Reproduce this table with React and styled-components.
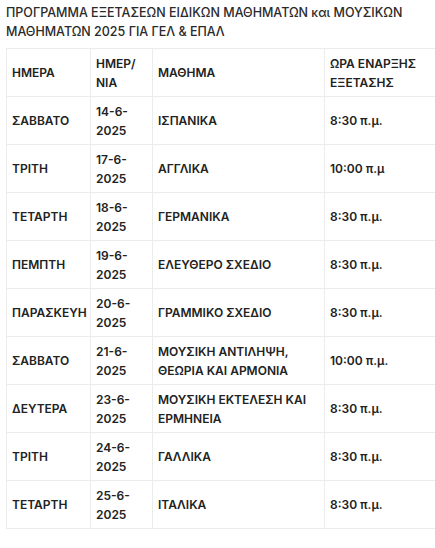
import React from "react";
import styled, { createGlobalStyle } from "styled-components";

const GlobalStyle = createGlobalStyle`
  html, body {
    margin: 0;
    padding: 0;
    background: #fff;
    overflow: hidden;
  }
  body {
    font-family: Inter, "Noto Sans", sans-serif;
    color: #222;
  }
`;

const Page = styled.div`
  padding: 3px 0 0 6px;
  width: 470px;
`;

const Title = styled.h2`
  margin: 0 0 7px 0;
  width: 420px;
  font-size: 12.5px;
  line-height: 19px;
  font-weight: 500;
  color: #2a2a2a;
`;

const Table = styled.table`
  border-collapse: collapse;
  width: 468px;
  table-layout: fixed;
`;

const Cell = styled.td`
  box-sizing: border-box;
  border: 1px solid #ececec;
  padding: 4px 5px;
  height: 48px;
  font-size: 12px;
  line-height: 19px;
  font-weight: 600;
  color: #222;
  vertical-align: middle;
  width: ${(p) => p.$w}px;
`;

const cols = [84, 62, 172, 150];

const rows = [
  ["ΣΑΒΒΑΤΟ", "14-6-\n2025", "ΙΣΠΑΝΙΚΑ", "8:30 π.μ."],
  ["ΤΡΙΤΗ", "17-6-\n2025", "ΑΓΓΛΙΚΑ", "10:00 π.μ"],
  ["ΤΕΤΑΡΤΗ", "18-6-\n2025", "ΓΕΡΜΑΝΙΚΑ", "8:30 π.μ."],
  ["ΠΕΜΠΤΗ", "19-6-\n2025", "ΕΛΕΥΘΕΡΟ ΣΧΕΔΙΟ", "8:30 π.μ."],
  ["ΠΑΡΑΣΚΕΥΗ", "20-6-\n2025", "ΓΡΑΜΜΙΚΟ ΣΧΕΔΙΟ", "8:30 π.μ."],
  ["ΣΑΒΒΑΤΟ", "21-6-\n2025", "ΜΟΥΣΙΚΗ ΑΝΤΙΛΗΨΗ,\nΘΕΩΡΙΑ ΚΑΙ ΑΡΜΟΝΙΑ", "10:00 π.μ."],
  ["ΔΕΥΤΕΡΑ", "23-6-\n2025", "ΜΟΥΣΙΚΗ ΕΚΤΕΛΕΣΗ ΚΑΙ\nΕΡΜΗΝΕΙΑ", "8:30 π.μ."],
  ["ΤΡΙΤΗ", "24-6-\n2025", "ΓΑΛΛΙΚΑ", "8:30 π.μ."],
  ["ΤΕΤΑΡΤΗ", "25-6-\n2025", "ΙΤΑΛΙΚΑ", "8:30 π.μ."],
];

const header = ["ΗΜΕΡΑ", "ΗΜΕΡ/\nΝΙΑ", "ΜΑΘΗΜΑ", "ΩΡΑ ΕΝΑΡΞΗΣ\nΕΞΕΤΑΣΗΣ"];

// splits "a\nb" into lines with <br />
const Lines = ({ text }) =>
  text.split("\n").map((line, i, arr) => (
    <React.Fragment key={i}>
      {line}
      {i < arr.length - 1 && <br />}
    </React.Fragment>
  ));

export default function App() {
  return (
    <Page>
      <GlobalStyle />
      <Title>
        ΠΡΟΓΡΑΜΜΑ ΕΞΕΤΑΣΕΩΝ ΕΙΔΙΚΩΝ ΜΑΘΗΜΑΤΩΝ και ΜΟΥΣΙΚΩΝ ΜΑΘΗΜΑΤΩΝ 2025
        ΓΙΑ ΓΕΛ &amp; ΕΠΑΛ
      </Title>
      <Table>
        <tbody>
          <tr>
            {header.map((h, i) => (
              <Cell key={i} $w={cols[i]}>
                <Lines text={h} />
              </Cell>
            ))}
          </tr>
          {rows.map((r, ri) => (
            <tr key={ri}>
              {r.map((c, ci) => (
                <Cell key={ci} $w={cols[ci]}>
                  <Lines text={c} />
                </Cell>
              ))}
            </tr>
          ))}
        </tbody>
      </Table>
    </Page>
  );
}
